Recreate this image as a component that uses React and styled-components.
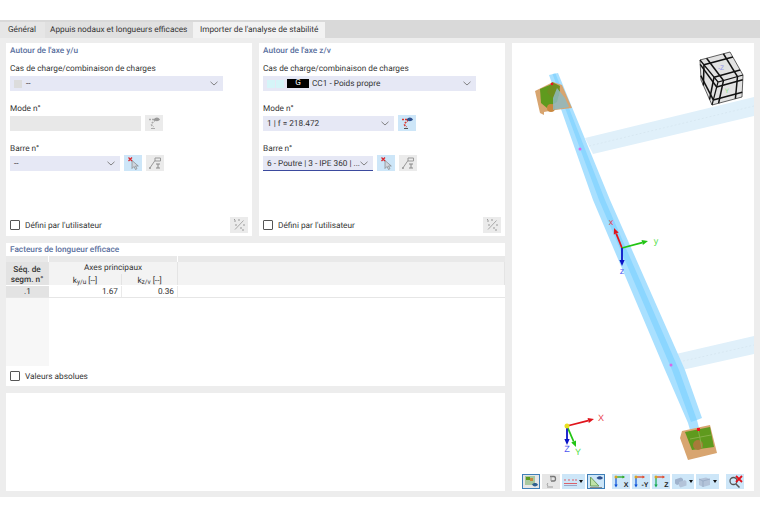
import React from "react";
import styled, { createGlobalStyle } from "styled-components";

const Global = createGlobalStyle`
  html, body { margin: 0; padding: 0; background: #fff; }
  body {
    font-family: Roboto, "Noto Sans", sans-serif;
    font-size: 8.25px;
    color: #333;
    text-rendering: geometricPrecision;
  }
`;

const Page = styled.div`
  width: 760px;
  height: 519px;
  padding-top: 20px;
  box-sizing: border-box;
  overflow: hidden;
  background: #fff;
`;

const TabBar = styled.div`
  display: flex;
  height: 18px;
  padding-top: 2px;
  box-sizing: border-box;
  background: #d9d9d9;
`;

const Tab = styled.div`
  width: ${(p) => p.$w}px;
  padding-left: ${(p) => p.$pad}px;
  box-sizing: border-box;
  line-height: 17px;
  background: ${(p) => (p.$active ? "#f2f2f2" : p.$light ? "#e6e6e6" : "#e0e0e0")};
  white-space: nowrap;
`;

const Content = styled.div`
  display: grid;
  grid-template-columns: 499px 242px;
  gap: 7px;
  height: 459px;
  padding: 5px 6px 6px;
  box-sizing: border-box;
  background: #ededed;
`;

const LeftCol = styled.div`
  display: grid;
  grid-template-rows: 193px 143px 98px;
  row-gap: 7px;
  height: 448px;
  align-content: start;
`;

const TopRow = styled.div`
  display: grid;
  grid-template-columns: 246px 246px;
  column-gap: 7px;
`;

const Panel = styled.section`
  display: flex;
  flex-direction: column;
  background: #fff;
  padding: ${(p) => (p.$flush ? "0" : "2px 4px 3px")};
  box-sizing: border-box;
`;

const Title = styled.div`
  height: 11px;
  line-height: 13px;
  margin-bottom: 7px;
  font-weight: 500;
  color: #5a6f9e;
`;

const Field = styled.div`
  margin-bottom: 12px;
`;

const Label = styled.div`
  height: 11px;
  line-height: 13px;
  margin-bottom: 2px;
`;

const ControlRow = styled.div`
  display: flex;
  gap: 4px;
  height: 15px;
`;

const Select = styled.div`
  display: flex;
  align-items: center;
  width: ${(p) => p.$w}px;
  height: 15px;
  padding: 0 5px 0 4px;
  box-sizing: border-box;
  background: ${(p) => (p.$off ? "#e8e8e8" : "#e6e8f5")};
  border-bottom: ${(p) => (p.$focus ? "1px solid #3b4a9e" : "none")};
  white-space: nowrap;
  overflow: hidden;
`;

const SelectText = styled.span`
  flex: 1;
  min-width: 0;
  padding-top: 1.5px;
`;

const Swatch = styled.span`
  width: 8px;
  height: 8px;
  margin-right: ${(p) => (p.$gap ? p.$gap : 1)}px;
  background: ${(p) => p.$c};
  flex: none;
`;

const GBadge = styled.span`
  width: 22px;
  height: 9px;
  line-height: 9px;
  margin: 0 3px 0 2px;
  background: #000;
  color: #fff;
  text-align: center;
  flex: none;
`;

const IconBtn = styled.div`
  display: flex;
  align-items: center;
  justify-content: center;
  width: 18px;
  height: 16px;
  margin-top: -1px;
  background: ${(p) => (p.$on ? "#cde6f8" : "#ebebeb")};
  flex: none;
`;

const Footer = styled.div`
  display: flex;
  align-items: center;
  justify-content: space-between;
  height: 16px;
  margin-top: auto;
`;

const CheckWrap = styled.label`
  display: flex;
  align-items: center;
  gap: 5px;
`;

const CheckText = styled.span`
  padding-top: 1.5px;
`;

const CheckBox = styled.span`
  width: 8px;
  height: 8px;
  border: 1px solid #555;
  border-radius: 1px;
  background: #fff;
`;

const TableTitle = styled(Title)`
  margin: 0;
  padding: 1px 4px 0;
  height: 13px;
  box-sizing: border-box;
`;

const Grid = styled.div`
  display: grid;
  grid-template-columns: 43px 73px 56px 1fr;
  grid-template-rows: 6px 12px 11px 1px 11px;
  border-bottom: 1px solid #e6e6e6;
`;

const Strip = styled.div`
  background: #e9e9e9;
  margin-right: ${(p) => (p.$gap ? 1 : 0)}px;
  grid-column: ${(p) => p.$col};
`;

const HeadCell = styled.div`
  grid-column: ${(p) => p.$col};
  grid-row: ${(p) => p.$row};
  display: flex;
  align-items: center;
  justify-content: center;
  padding-top: ${(p) => p.$pt || 0}px;
  text-align: center;
  line-height: 10px;
  font-weight: ${(p) => (p.$bold ? 500 : 400)};
  background: ${(p) => (p.$grey ? "#e3e3e3" : "#f3f3f3")};
  border-right: 1px solid #e4e4e4;
  box-sizing: border-box;
  sub { font-size: 6.5px; line-height: 0; vertical-align: -1px; }
`;

const NumCell = styled.div`
  grid-row: 5;
  grid-column: ${(p) => p.$col};
  line-height: 13px;
  height: 11px;
  padding-right: 3px;
  text-align: right;
  background: #fff;
  border-right: 1px solid #eaeaea;
`;

const IdCell = styled.div`
  grid-row: 5;
  grid-column: 1;
  line-height: 12px;
  height: 11px;
  text-align: center;
  background: #e3e3e3;
`;

const Filler = styled.div`
  flex: 1;
  width: 43px;
  background: #f7f7f7;
`;

const TableFoot = styled.div`
  display: flex;
  align-items: center;
  height: 20px;
  padding-left: 4px;
`;

const Viewer = styled.section`
  display: flex;
  flex-direction: column;
  height: 448px;
  background: #fff;
`;

const Canvas = styled.svg`
  display: block;
  width: 242px;
  height: 431px;
`;

const Toolbar = styled.div`
  display: flex;
  height: 15px;
  padding-left: 10px;
`;

const ToolBtn = styled.div`
  display: flex;
  align-items: center;
  justify-content: center;
  gap: 2px;
  width: ${(p) => p.$w || 18}px;
  height: 15px;
  margin-right: ${(p) => p.$mr ?? 2}px;
  box-sizing: border-box;
  background: ${(p) => (p.$grey ? "#e6e6e6" : "#cde6f8")};
  border: ${(p) => (p.$sel ? "1px solid #3f7fb8" : "none")};
`;

const Caret = styled.span`
  width: 0;
  height: 0;
  border-left: 2.5px solid transparent;
  border-right: 2.5px solid transparent;
  border-top: 3px solid #111;
`;

const Chevron = () => (
  <svg width="8" height="5" viewBox="0 0 8 5" style={{ flex: "none" }}>
    <path d="M.5.8 4 4 7.5.8" fill="none" stroke="#777" strokeWidth=".9" />
  </svg>
);

const ModeIcon = ({ on }) => (
  <svg width="14" height="14" viewBox="0 0 14 14">
    <path
      d="M2 3.500h5M7.500 3.500c1 2.500-2.500 2.500-3 4.500-.3 1.500 1 2 2 3"
      fill="none"
      stroke={on ? "#d9362b" : "#aaa"}
      strokeWidth="1.500"
      strokeDasharray="2 1"
    />
    <path d="M6.500 3.500c2-2.800 4.800-2.800 6.500 0-1.700 2.200-4.500 2.200-6.500 0z" fill={on ? "#2f4f8f" : "#999"} />
    <path d="M4 12.500h4" stroke={on ? "#555" : "#aaa"} />
  </svg>
);

const PickIcon = () => (
  <svg width="14" height="14" viewBox="0 0 14 14">
    <path d="M6 4.500v8l2-2 1.500 3 1.500-.8-1.500-2.700h2.800z" fill="#cfd6de" stroke="#777" strokeWidth=".6" />
    <path d="M2.500 1.500 6 5M6 1.500 2.500 5" stroke="#d9282f" strokeWidth="1.300" />
  </svg>
);

const SectionIcon = () => (
  <svg width="14" height="14" viewBox="0 0 14 14">
    <path d="M1.500 12.500 7 4.500M7 2h5.500v3H7z" fill="none" stroke="#999" />
    <path d="M8 8h4M10 8v4M8 12h4" stroke="#888" />
    <circle cx="2" cy="12" r="1" fill="#999" />
  </svg>
);

const ScatterIcon = () => (
  <svg width="13" height="13" viewBox="0 0 13 13">
    <path d="M2 11.500 10.500 2.500" stroke="#aaa" />
    <path d="M1 3h2M5 2h2M10 7h2M2 7h2M7 10h2M9 12h2M1 1.500h1" stroke="#999" />
  </svg>
);

const ViewIcon = () => (
  <svg width="15" height="13" viewBox="0 0 15 13">
    <rect x="1" y="1" width="10" height="9" fill="#a8c8a0" />
    <rect x="2" y="2" width="4" height="3" fill="#5f9a1e" />
    <rect x="6" y="3" width="3" height="3" fill="#c9883f" />
    <path d="M8 9.500c2-2 5-2 6 .5-2 2-4.500 2-6-.5z" fill="#2f5f8f" />
  </svg>
);

const NumberIcon = () => (
  <svg width="14" height="13" viewBox="0 0 14 13">
    <path d="M6 1.500h4c2 0 2 4.500 0 4.500H7" fill="none" stroke="#777" strokeWidth="1.300" />
    <path d="M7 1.500V6M4 8c-1 1-1 2 0 3M3 12h6" fill="none" stroke="#999" />
  </svg>
);

const LinesIcon = () => (
  <svg width="13" height="11" viewBox="0 0 13 11">
    <path d="M1 3v2M5 3v2M9 3v2M12 3v2" stroke="#d9606a" />
    <path d="M0 7.500h13" stroke="#d9606a" />
    <path d="M0 9.500h13" stroke="#9aa8c8" />
  </svg>
);

const RulerIcon = () => (
  <svg width="15" height="13" viewBox="0 0 15 13">
    <path d="M1.500 11V2l8.500 9z" fill="#bfe3a8" stroke="#6f9f5f" />
    <path d="M1 12.500h12" stroke="#888" />
    <path d="M7.500 3c2-2.500 4.500-2.500 6.500 0-2 2-4.500 2-6.500 0z" fill="#2f4f8f" />
  </svg>
);

const AxisIcon = ({ label, top, down }) => (
  <svg width="16" height="13" viewBox="0 0 16 13">
    <path d="M3 2v8" stroke={down} strokeWidth="1.200" />
    <path d="M1.300 9.500h3.400L3 12.500z" fill={down} />
    <path d="M3 2h7" stroke={top} strokeWidth="1.200" />
    <path d="M9.500.5v3l2.500-1.500z" fill={top} />
    <circle cx="3" cy="2" r="1.500" fill="#d9a520" />
    <text x="15.500" y="11.500" textAnchor="end" fontFamily="Liberation Sans" fontWeight="700" fontSize="7" fill="#222">
      {label}
    </text>
  </svg>
);

const StackIcon = () => (
  <svg width="13" height="12" viewBox="0 0 13 12">
    <path d="M1 3.500 7 1.500 9 3 9 7 3 9 1 7.500z" fill="#9fb2cc" />
    <path d="M5 6 11 4 12.500 5.500V9.500L6.500 11.500 5 10z" fill="#b3c3d9" />
  </svg>
);

const BoxIcon = () => (
  <svg width="13" height="12" viewBox="0 0 13 12">
    <path d="M1 3 8 1.500 12 3V9L5 11 1 9z" fill="#b3c3d9" />
    <path d="M1 3 5 5V11M5 5 12 3" fill="none" stroke="#8fa3bf" strokeWidth=".7" />
  </svg>
);

const SearchCloseIcon = () => (
  <svg width="15" height="13" viewBox="0 0 15 13">
    <circle cx="5.500" cy="6" r="3.500" fill="none" stroke="#555" strokeWidth="1.300" />
    <path d="M8 9l3.500 3.500" stroke="#555" strokeWidth="1.500" />
    <path d="M8 1l6 6M14 1 8 7" stroke="#e0141c" strokeWidth="1.800" />
  </svg>
);

// cube faces, grid lines come from the corners
const lerp = (a, b, t) => [a[0] + (b[0] - a[0]) * t, a[1] + (b[1] - a[1]) * t];
const CUBE_FACES = [
  [[700, 60], [730, 52], [743, 75], [718, 82]],
  [[718, 82], [743, 75], [742, 97], [712, 105]],
  [[700, 60], [718, 82], [712, 105], [701, 80]],
];
const faceLines = ([a, b, c, d]) =>
  [0.22, 0.78].flatMap((t) => {
    const p = lerp(a, b, t);
    const q = lerp(d, c, t);
    const r = lerp(a, d, t);
    const s = lerp(b, c, t);
    return [`M${p[0]} ${p[1]}L${q[0]} ${q[1]}`, `M${r[0]} ${r[1]}L${s[0]} ${s[1]}`];
  });

const Arrow = ({ from, to, color }) => {
  const dx = to[0] - from[0];
  const dy = to[1] - from[1];
  const len = Math.hypot(dx, dy);
  const ux = dx / len;
  const uy = dy / len;
  const bx = to[0] - ux * 6;
  const by = to[1] - uy * 6;
  const head = `${to[0]},${to[1]} ${bx - uy * 2.6},${by + ux * 2.6} ${bx + uy * 2.6},${by - ux * 2.6}`;
  return (
    <g>
      <path d={`M${from[0]} ${from[1]}L${bx} ${by}`} stroke={color} strokeWidth="1.800" />
      <polygon points={head} fill={color} />
    </g>
  );
};

const AxisCross = ({ o, x, y, z, labels, dot }) => (
  <g>
    <Arrow from={o} to={x} color="#e0141c" />
    <Arrow from={o} to={y} color="#22c414" />
    <Arrow from={o} to={z} color="#0a14c8" />
    {dot && <circle cx={o[0]} cy={o[1]} r="2.500" fill="#e8e020" />}
    <text x={labels.x[0]} y={labels.x[1]} fill="#e8404a" fontFamily="Liberation Sans" fontSize="9" textAnchor="middle">
      {dot ? "X" : "x"}
    </text>
    <text x={labels.y[0]} y={labels.y[1]} fill="#55e04a" fontFamily="Liberation Sans" fontSize="9" textAnchor="middle">
      {dot ? "Y" : "y"}
    </text>
    <text x={labels.z[0]} y={labels.z[1]} fill="#4a55f0" fontFamily="Liberation Sans" fontSize="9" textAnchor="middle">
      {dot ? "Z" : "z"}
    </text>
  </g>
);

const Scene = () => (
  <Canvas viewBox="512 43 242 431">
    <polygon points="585,138 754,97 754,116 593,154" fill="#e0f0fa" />
    <path d="M589 146 754 106" stroke="#cfdfe8" strokeWidth=".5" strokeDasharray="2 2" />
    <polygon points="676,354 754,336 754,354 682,370" fill="#e0f0fa" />
    <path d="M679 362 754 345" stroke="#cfdfe8" strokeWidth=".5" strokeDasharray="2 2" />

    <polygon points="549,75 558,73 610,200 685,370 702,418 697,420 699,428 690,430 688,423 665,370 593,200" fill="#a9e0ff" />
    <polygon points="552.500,74 555.500,73.500 605,200 679,370 697,420 691,422 672,370 599,200" fill="#8bd6ff" />

    <g>
      <polygon points="535,91 553,82 562,85 572,108 555,110 544,112 544,115 540,113" fill="#d8a570" />
      <polygon points="540,89 552,84 560,90 557,102 547,108 541,103" fill="#5f9a1e" />
      <polygon points="552,82 560,86 559,96 552,98 547,92" fill="#6f8f20" />
      <circle cx="551" cy="108" r="4" fill="#c9883f" />
      <polygon points="557,88 565,98 569,107 553,110 553,98" fill="#8fb8c0" opacity=".85" />
      <circle cx="552" cy="84" r="1.300" fill="#f01020" />
    </g>
    <g>
      <polygon points="682,431 710,425 717,453 688,460 680,438" fill="#d8a570" />
      <polygon points="685,432 710,427 714,447 692,450" fill="#5f9a1e" />
      <circle cx="698" cy="445" r="5" fill="#a87a3a" />
      <path d="M690 439 711 435M698 429 702 448" stroke="#86b048" strokeWidth="1" />
      <rect x="697" y="428" width="3" height="3" fill="#f01020" />
    </g>

    <circle cx="580" cy="149" r="1.500" fill="#d868e8" />
    <circle cx="671" cy="365" r="1.500" fill="#d868e8" />

    <polygon points="700,60 730,52 743,75 742,97 712,105 701,80" fill="#e2e2e2" stroke="#222" strokeWidth=".7" />
    {CUBE_FACES.flatMap(faceLines).map((d) => (
      <path key={d} d={d} fill="none" stroke="#111" strokeWidth="1.500" />
    ))}
    <path d="M700 60 718 82 743 75M718 82 712 105" fill="none" stroke="#111" strokeWidth="1.200" />
    <text x="721" y="70" fontFamily="Liberation Sans" fontSize="6.500" fill="#8f8fe8" textAnchor="middle">
      -Z
    </text>
    <text x="727" y="93" fontFamily="Liberation Sans" fontSize="6.500" fill="#8fe08f" textAnchor="middle">
      Y
    </text>

    <AxisCross
      o={[622, 248]}
      x={[614, 228]}
      y={[648, 241]}
      z={[622, 266]}
      labels={{ x: [611, 225], y: [656, 244], z: [622, 274] }}
    />
    <AxisCross
      dot
      o={[567, 426]}
      x={[594, 419]}
      y={[576, 447]}
      z={[567, 445]}
      labels={{ x: [601, 421], y: [578, 455], z: [567, 452] }}
    />
  </Canvas>
);

const Axis = ({ title, children, mode, modeOn, modeOff, member, memberFocus }) => (
  <Panel>
    <Title>{title}</Title>
    <Field>
      <Label>Cas de charge/combinaison de charges</Label>
      <ControlRow>
        <Select $w={213}>
          {children}
          <Chevron />
        </Select>
      </ControlRow>
    </Field>
    <Field>
      <Label>Mode n°</Label>
      <ControlRow>
        <Select $w={131} $off={modeOff}>
          <SelectText>{mode}</SelectText>
          {!modeOff && <Chevron />}
        </Select>
        <IconBtn $on={modeOn}>
          <ModeIcon on={modeOn} />
        </IconBtn>
      </ControlRow>
    </Field>
    <Field>
      <Label>Barre n°</Label>
      <ControlRow>
        <Select $w={110} $focus={memberFocus}>
          <SelectText>{member}</SelectText>
          <Chevron />
        </Select>
        <IconBtn $on>
          <PickIcon />
        </IconBtn>
        <IconBtn>
          <SectionIcon />
        </IconBtn>
      </ControlRow>
    </Field>
    <Footer>
      <CheckWrap>
        <CheckBox />
        <CheckText>Défini par l'utilisateur</CheckText>
      </CheckWrap>
      <IconBtn>
        <ScatterIcon />
      </IconBtn>
    </Footer>
  </Panel>
);

export default function App() {
  return (
    <Page>
      <Global />
      <TabBar>
        <Tab $w={45} $pad={8} $light>
          Général
        </Tab>
        <Tab $w={148} $pad={5}>
          Appuis nodaux et longueurs efficaces
        </Tab>
        <Tab $w={132} $pad={7} $active>
          Importer de l'analyse de stabilité
        </Tab>
      </TabBar>
      <Content>
        <LeftCol>
          <TopRow>
            <Axis title="Autour de l'axe y/u" mode="" modeOff member="--">
              <Swatch $c="#dcdcdc" $gap={4} />
              <SelectText>--</SelectText>
            </Axis>
            <Axis
              title="Autour de l'axe z/v"
              mode="1 | f = 218.472"
              modeOn
              member="6 - Poutre | 3 - IPE 360 | ..."
              memberFocus
            >
              <Swatch $c="#d5f5f8" />
              <Swatch $c="#d5f5f8" />
              <GBadge>G</GBadge>
              <SelectText>CC1 - Poids propre</SelectText>
            </Axis>
          </TopRow>
          <Panel $flush>
            <TableTitle>Facteurs de longueur efficace</TableTitle>
            <Grid>
              <Strip $col="1" $gap />
              <Strip $col="2 / span 2" $gap />
              <Strip $col="4" />
              <HeadCell $col="1" $row="2 / span 2" $grey $bold $pt={3}>
                Séq. de
                <br />
                segm. n°
              </HeadCell>
              <HeadCell $col="2 / span 2" $row="2">
                Axes principaux
              </HeadCell>
              <HeadCell $col="4" $row="2 / span 2" />
              <HeadCell $col="2" $row="3" $pt={2}>
                <span>
                  k<sub>y/u</sub> [--]
                </span>
              </HeadCell>
              <HeadCell $col="3" $row="3" $pt={2}>
                <span>
                  k<sub>z/v</sub> [--]
                </span>
              </HeadCell>
              <IdCell>.1</IdCell>
              <NumCell $col="2">1.67</NumCell>
              <NumCell $col="3">0.36</NumCell>
            </Grid>
            <Filler />
            <TableFoot>
              <CheckWrap>
                <CheckBox />
                <CheckText>Valeurs absolues</CheckText>
              </CheckWrap>
            </TableFoot>
          </Panel>
          <Panel $flush />
        </LeftCol>
        <Viewer>
          <Scene />
          <Toolbar>
            <ToolBtn $sel $grey>
              <ViewIcon />
            </ToolBtn>
            <ToolBtn $grey>
              <NumberIcon />
            </ToolBtn>
            <ToolBtn $w={23}>
              <LinesIcon />
              <Caret />
            </ToolBtn>
            <ToolBtn $sel $mr={7}>
              <RulerIcon />
            </ToolBtn>
            <ToolBtn>
              <AxisIcon label="X" top="#22a414" down="#0a50d8" />
            </ToolBtn>
            <ToolBtn>
              <AxisIcon label="-Y" top="#e04020" down="#0a50d8" />
            </ToolBtn>
            <ToolBtn>
              <AxisIcon label="Z" top="#e04020" down="#12a850" />
            </ToolBtn>
            <ToolBtn $w={22}>
              <StackIcon />
              <Caret />
            </ToolBtn>
            <ToolBtn $w={23} $mr={7}>
              <BoxIcon />
              <Caret />
            </ToolBtn>
            <ToolBtn>
              <SearchCloseIcon />
            </ToolBtn>
          </Toolbar>
        </Viewer>
      </Content>
    </Page>
  );
}
